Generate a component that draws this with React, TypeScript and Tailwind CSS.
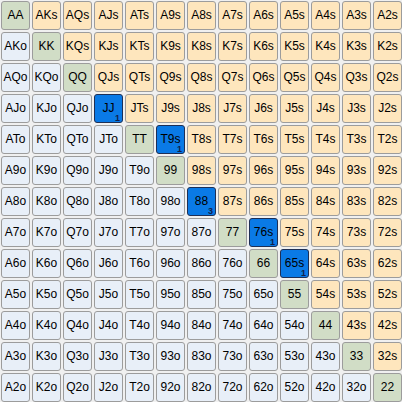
const RANKS = ["A", "K", "Q", "J", "T", "9", "8", "7", "6", "5", "4", "3", "2"];

const selected: Record<string, number> = { JJ: 1, T9s: 1, "88": 3, "76s": 1, "65s": 1 };

function handName(r: number, c: number) {
  if (r === c) return RANKS[r] + RANKS[c];
  if (c > r) return RANKS[r] + RANKS[c] + "s";
  return RANKS[c] + RANKS[r] + "o";
}

function Cell({ r, c }: { r: number; c: number }) {
  const name = handName(r, c);
  const count = selected[name];
  let color = "bg-[#e8eff8] border-[#9c9c9c]";
  if (r === c) color = "bg-[#d1ddc6] border-[#9c9c9c]";
  else if (c > r) color = "bg-[#fee6bd] border-[#9c9c9c]";
  if (count) color = "bg-[#0a7ae6] border-[#1e2f55]";
  return (
    <div className={`relative flex h-[29px] w-[29px] items-center justify-center rounded-[3px] border ${color}`}>
      <span className="mb-[1px] text-[12px] leading-none text-black">{name}</span>
      {count ? (
        <span className="absolute bottom-[-1px] right-[2px] text-[9px] font-bold leading-none text-[#10204a]">{count}</span>
      ) : null}
    </div>
  );
}

export default function App() {
  return (
    <div className="h-[402px] w-[402px] bg-[#f0f0f0] pl-[1px] pt-[1px] font-['Liberation_Sans',sans-serif]">
      <div className="grid grid-cols-[repeat(13,29px)] gap-[2px]">
        {RANKS.map((_, r) => RANKS.map((_, c) => <Cell key={`${r}-${c}`} r={r} c={c} />))}
      </div>
    </div>
  );
}
